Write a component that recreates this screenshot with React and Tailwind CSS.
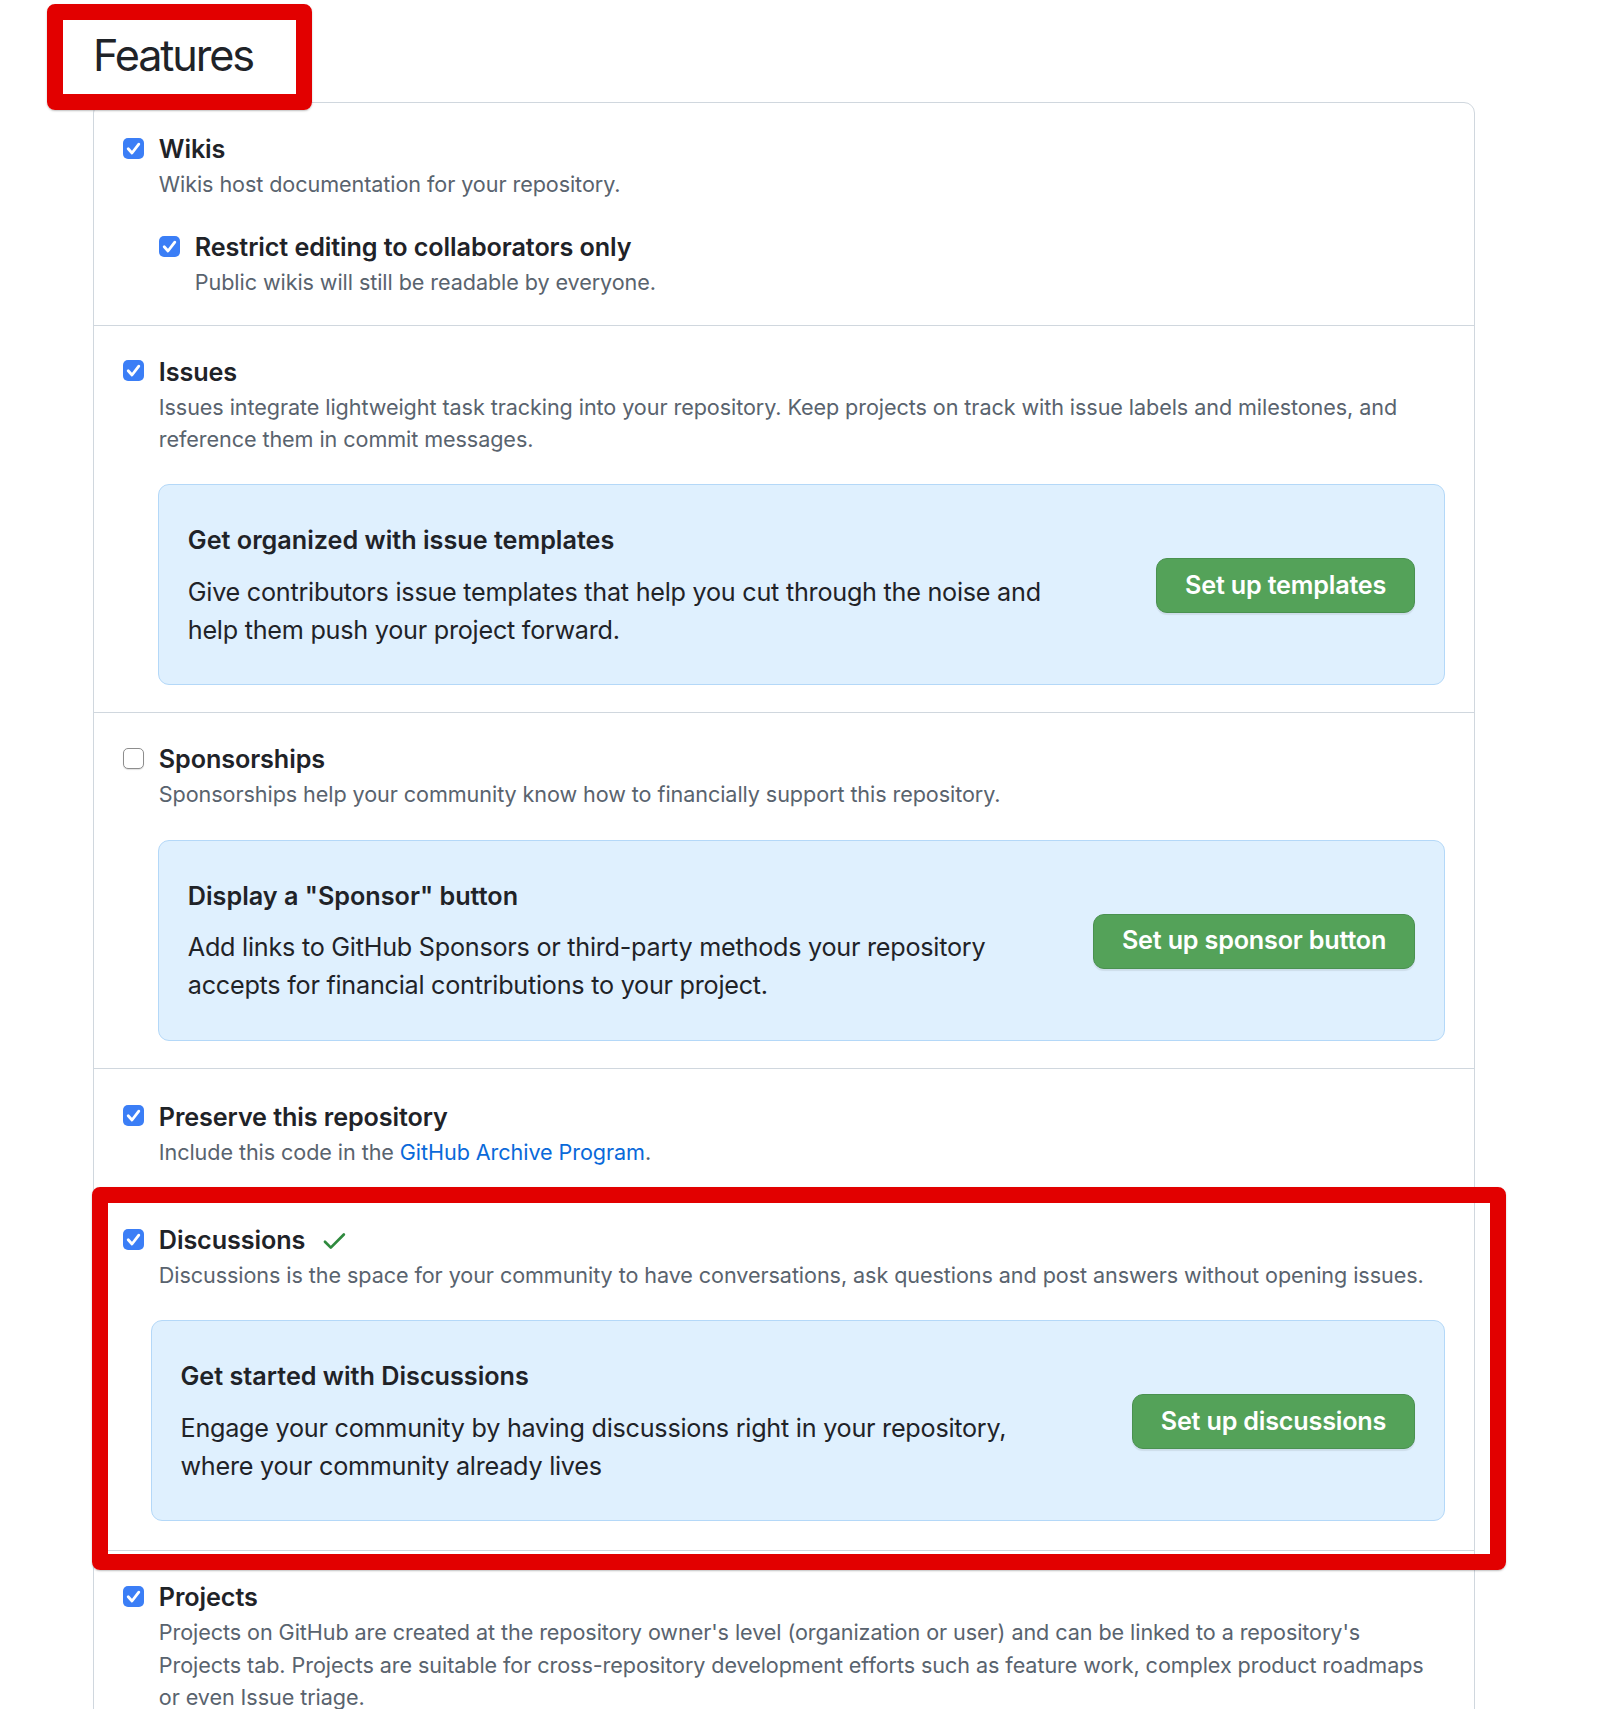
import React from "react";

function Checkbox({ checked }) {
  if (checked) {
    return (
      <span className="mt-[6.5px] flex h-[21px] w-[21px] shrink-0 items-center justify-center rounded-[5px] bg-[#3b7ef6]">
        <svg width="21" height="21" viewBox="0 0 21 21">
          <polyline points="5.2,10.8 9,15 15.8,6.2" fill="none" stroke="white" strokeWidth="2.8" strokeLinecap="round" strokeLinejoin="round" />
        </svg>
      </span>
    );
  }
  return <span className="mt-[6.5px] h-[21px] w-[21px] shrink-0 rounded-[5px] border-[1.5px] border-[#8d8d8d] bg-white shadow-[0_1px_1px_rgba(0,0,0,0.12)]" />;
}

function Feature({ checked = true, label, extra, desc, descClass = "", children }) {
  return (
    <div className="flex items-start gap-[15px]">
      <Checkbox checked={checked} />
      <div className="min-w-0 flex-1">
        <div className="flex items-center text-[25.2px] leading-[37px] font-semibold tracking-[-0.1px] text-[#1f2328]">
          <span>{label}</span>
          {extra}
        </div>
        <p className={"text-[21.6px] leading-[32.4px] tracking-[-0.08px] text-[#59636e] " + descClass}>{desc}</p>
        {children}
      </div>
    </div>
  );
}

function Flash({ title, body, button, className }) {
  return (
    <div className={"flex items-center rounded-[11px] border border-[#b4d8f8] bg-[#dff0fe] px-[29px] pb-[35px] pt-[37px] " + className}>
      <div className="min-w-0 flex-1">
        <div className="text-[25.2px] leading-[37px] font-semibold text-[#1f2328]">{title}</div>
        <p className="mt-[14.3px] text-[25.2px] leading-[37.8px] tracking-[-0.25px] text-[#1f2328]">{body}</p>
      </div>
      <button className="ml-[80px] h-[55px] shrink-0 rounded-[11px] border border-[#4a9150] bg-[#54a259] px-[28px] text-[25.2px] font-semibold tracking-[-0.2px] text-white shadow-[0_2px_1px_rgba(0,0,0,0.08)]">
        {button}
      </button>
    </div>
  );
}

function GreenCheck() {
  return (
    <svg className="ml-[15px]" width="28.8" height="28.8" viewBox="0 0 16 16" fill="#2f8a3e">
      <path d="M13.78 4.22a.75.75 0 0 1 0 1.06l-7.25 7.25a.75.75 0 0 1-1.06 0L2.22 9.28a.751.751 0 0 1 .018-1.042.751.751 0 0 1 1.042-.018L6 10.94l6.72-6.72a.75.75 0 0 1 1.06 0Z" />
    </svg>
  );
}

export default function App() {
  return (
    <div className="relative h-[1709px] w-[1624px] overflow-hidden bg-white pl-[93px] pt-[29px] font-['Inter',sans-serif]">
      <h2 className="mb-[21px] text-[43.2px] leading-[52px] font-normal tracking-[-2.1px] text-[#1f2328]">Features</h2>

      <div className="w-[1382px] rounded-[11px] border border-[#d0d7de]">
        <div className="px-[28.8px] pb-[26px] pt-[28px]">
          <Feature label="Wikis" desc="Wikis host documentation for your repository.">
            <div className="mt-[28.8px]">
              <Feature label="Restrict editing to collaborators only" desc="Public wikis will still be readable by everyone." />
            </div>
          </Feature>
        </div>

        <div className="border-t border-[#d0d7de] px-[28.8px] pb-[27px] pt-[28px]">
          <Feature
            label="Issues"
            desc="Issues integrate lightweight task tracking into your repository. Keep projects on track with issue labels and milestones, and reference them in commit messages."
          >
            <Flash
              className="-ml-[1px] mt-[29px]"
              title="Get organized with issue templates"
              body="Give contributors issue templates that help you cut through the noise and help them push your project forward."
              button="Set up templates"
            />
          </Feature>
        </div>

        <div className="border-t border-[#d0d7de] px-[28.8px] pb-[27px] pt-[28px]">
          <Feature checked={false} label="Sponsorships" desc="Sponsorships help your community know how to financially support this repository.">
            <Flash
              className="-ml-[1px] mt-[29px]"
              title={'Display a "Sponsor" button'}
              body="Add links to GitHub Sponsors or third-party methods your repository accepts for financial contributions to your project."
              button="Set up sponsor button"
            />
          </Feature>
        </div>

        <div className="border-t border-[#d0d7de] px-[28.8px] pb-[24px] pt-[30px]">
          <Feature
            label="Preserve this repository"
            desc={
              <>
                Include this code in the <span className="text-[#0969da]">GitHub Archive Program</span>.
              </>
            }
          />
        </div>

        <div className="border-t border-[#d0d7de] px-[28.8px] pb-[29px] pt-[29px]">
          <Feature
            label="Discussions"
            extra={<GreenCheck />}
            desc="Discussions is the space for your community to have conversations, ask questions and post answers without opening issues."
          >
            <Flash
              className="-ml-[8.3px] mt-[29px]"
              title="Get started with Discussions"
              body="Engage your community by having discussions right in your repository, where your community already lives"
              button="Set up discussions"
            />
          </Feature>
        </div>

        <div className="border-t border-[#d0d7de] px-[28.8px] pb-[28px] pt-[28px]">
          <Feature
            label="Projects"
            descClass="pr-[10px]"
            desc="Projects on GitHub are created at the repository owner's level (organization or user) and can be linked to a repository's Projects tab. Projects are suitable for cross-repository development efforts such as feature work, complex product roadmaps or even Issue triage."
          />
        </div>
      </div>

      <div className="absolute left-[47px] top-[4px] h-[106px] w-[265px] rounded-[8px] border-[16px] border-[#e20000] shadow-[0_1px_2px_rgba(0,0,0,0.25)]" />
      <div className="absolute left-[92px] top-[1187px] h-[383px] w-[1414px] rounded-[8px] border-[16px] border-[#e20000] shadow-[0_1px_2px_rgba(0,0,0,0.25)]" />
    </div>
  );
}
